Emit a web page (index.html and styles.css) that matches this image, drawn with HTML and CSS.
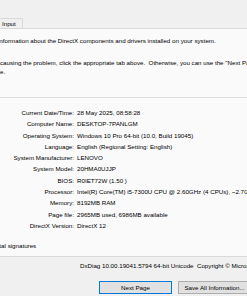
FILE: index.html
```html
<!DOCTYPE html>
<html lang="en">
<head>
    <meta charset="UTF-8">
    <meta name="viewport" content="width=device-width, initial-scale=1.0">
    <title>DirectX Diagnostic Tool</title>
    <link rel="stylesheet" href="styles.css">
</head>
<body>
    <div class="window">
        <div class="tabs">
            <div class="tab">Input</div>
        </div>
        <div class="page">
            <p class="intro">information about the DirectX components and drivers installed on your system.</p>
            <p class="help">causing the problem, click the appropriate tab above.&nbsp; Otherwise, you can use the "Next Page" button below to visit<br>e.</p>
            <div class="separator"></div>
            <div class="info">
                <span class="label">Current Date/Time:</span><span class="value">28 May 2025, 08:58:28</span>
                <span class="label">Computer Name:</span><span class="value">DESKTOP-7PANLGM</span>
                <span class="label">Operating System:</span><span class="value">Windows 10 Pro 64-bit (10.0, Build 19045)</span>
                <span class="label">Language:</span><span class="value">English (Regional Setting: English)</span>
                <span class="label">System Manufacturer:</span><span class="value">LENOVO</span>
                <span class="label">System Model:</span><span class="value">20HMA0UJJP</span>
                <span class="label">BIOS:</span><span class="value">R0IET72W (1.50 )</span>
                <span class="label">Processor:</span><span class="value">Intel(R) Core(TM) i5-7300U CPU @ 2.60GHz (4 CPUs), ~2.7GHz</span>
                <span class="label">Memory:</span><span class="value">8192MB RAM</span>
                <span class="label">Page file:</span><span class="value">2965MB used, 6986MB available</span>
                <span class="label">DirectX Version:</span><span class="value">DirectX 12</span>
            </div>
            <p class="check">ital signatures</p>
        </div>
        <div class="status">DxDiag 10.00.19041.5794 64-bit Unicode&nbsp; Copyright © Microsoft. All rights reserved.</div>
        <div class="buttons">
            <button class="btn default">Next Page</button>
            <button class="btn">Save All Information...</button>
        </div>
    </div>
</body>
</html>
```

FILE: styles.css
```css
body {
    margin: 0;
    width: 247px;
    height: 296px;
    overflow: hidden;
    background-color: #f0f0f0;
    font-family: "Liberation Sans", Arial, sans-serif;
    font-size: 6.2px;
    color: #000;
}

.window {
    width: 247px;
    overflow: hidden;
}

.tabs {
    height: 28px;
    display: flex;
    align-items: flex-end;
}

.tab {
    width: 20px;
    height: 9px;
    line-height: 9px;
    padding-left: 2px;
    border-top: 1px solid #d9d9d9;
    border-right: 1px solid #d9d9d9;
    background-color: #f0f0f0;
    white-space: nowrap;
}

.page {
    height: 227px;
    border-top: 1px solid #d9d9d9;
    border-bottom: 1px solid #d9d9d9;
    background-color: #fafafa;
    white-space: nowrap;
}

.page p {
    margin: 0;
    line-height: 9px;
}

.intro {
    padding-top: 7px;
    margin-left: -2px !important;
}

.help {
    margin-top: 13px !important;
}

.separator {
    height: 1px;
    margin-top: 21px;
    background-color: #dcdcdc;
}

.info {
    display: grid;
    grid-template-columns: 74px auto;
    column-gap: 3px;
    padding-top: 9px;
    line-height: 11.3px;
}

.label {
    text-align: right;
}

.check {
    margin-top: 10px !important;
    margin-left: -2px !important;
}

.status {
    padding-left: 80px;
    height: 9px;
    line-height: 9px;
    margin-top: 4px;
    white-space: nowrap;
}

.buttons {
    display: flex;
    gap: 6px;
    padding-left: 99px;
    margin-top: 11px;
    width: 400px;
}

.btn {
    flex: none;
    width: 73px;
    height: 13px;
    padding: 0;
    border: 1px solid #adadad;
    background-color: #e1e1e1;
    font-family: "Liberation Sans", Arial, sans-serif;
    font-size: 6.2px;
    color: #000;
}

.btn.default {
    border-color: #0078d7;
}
```
